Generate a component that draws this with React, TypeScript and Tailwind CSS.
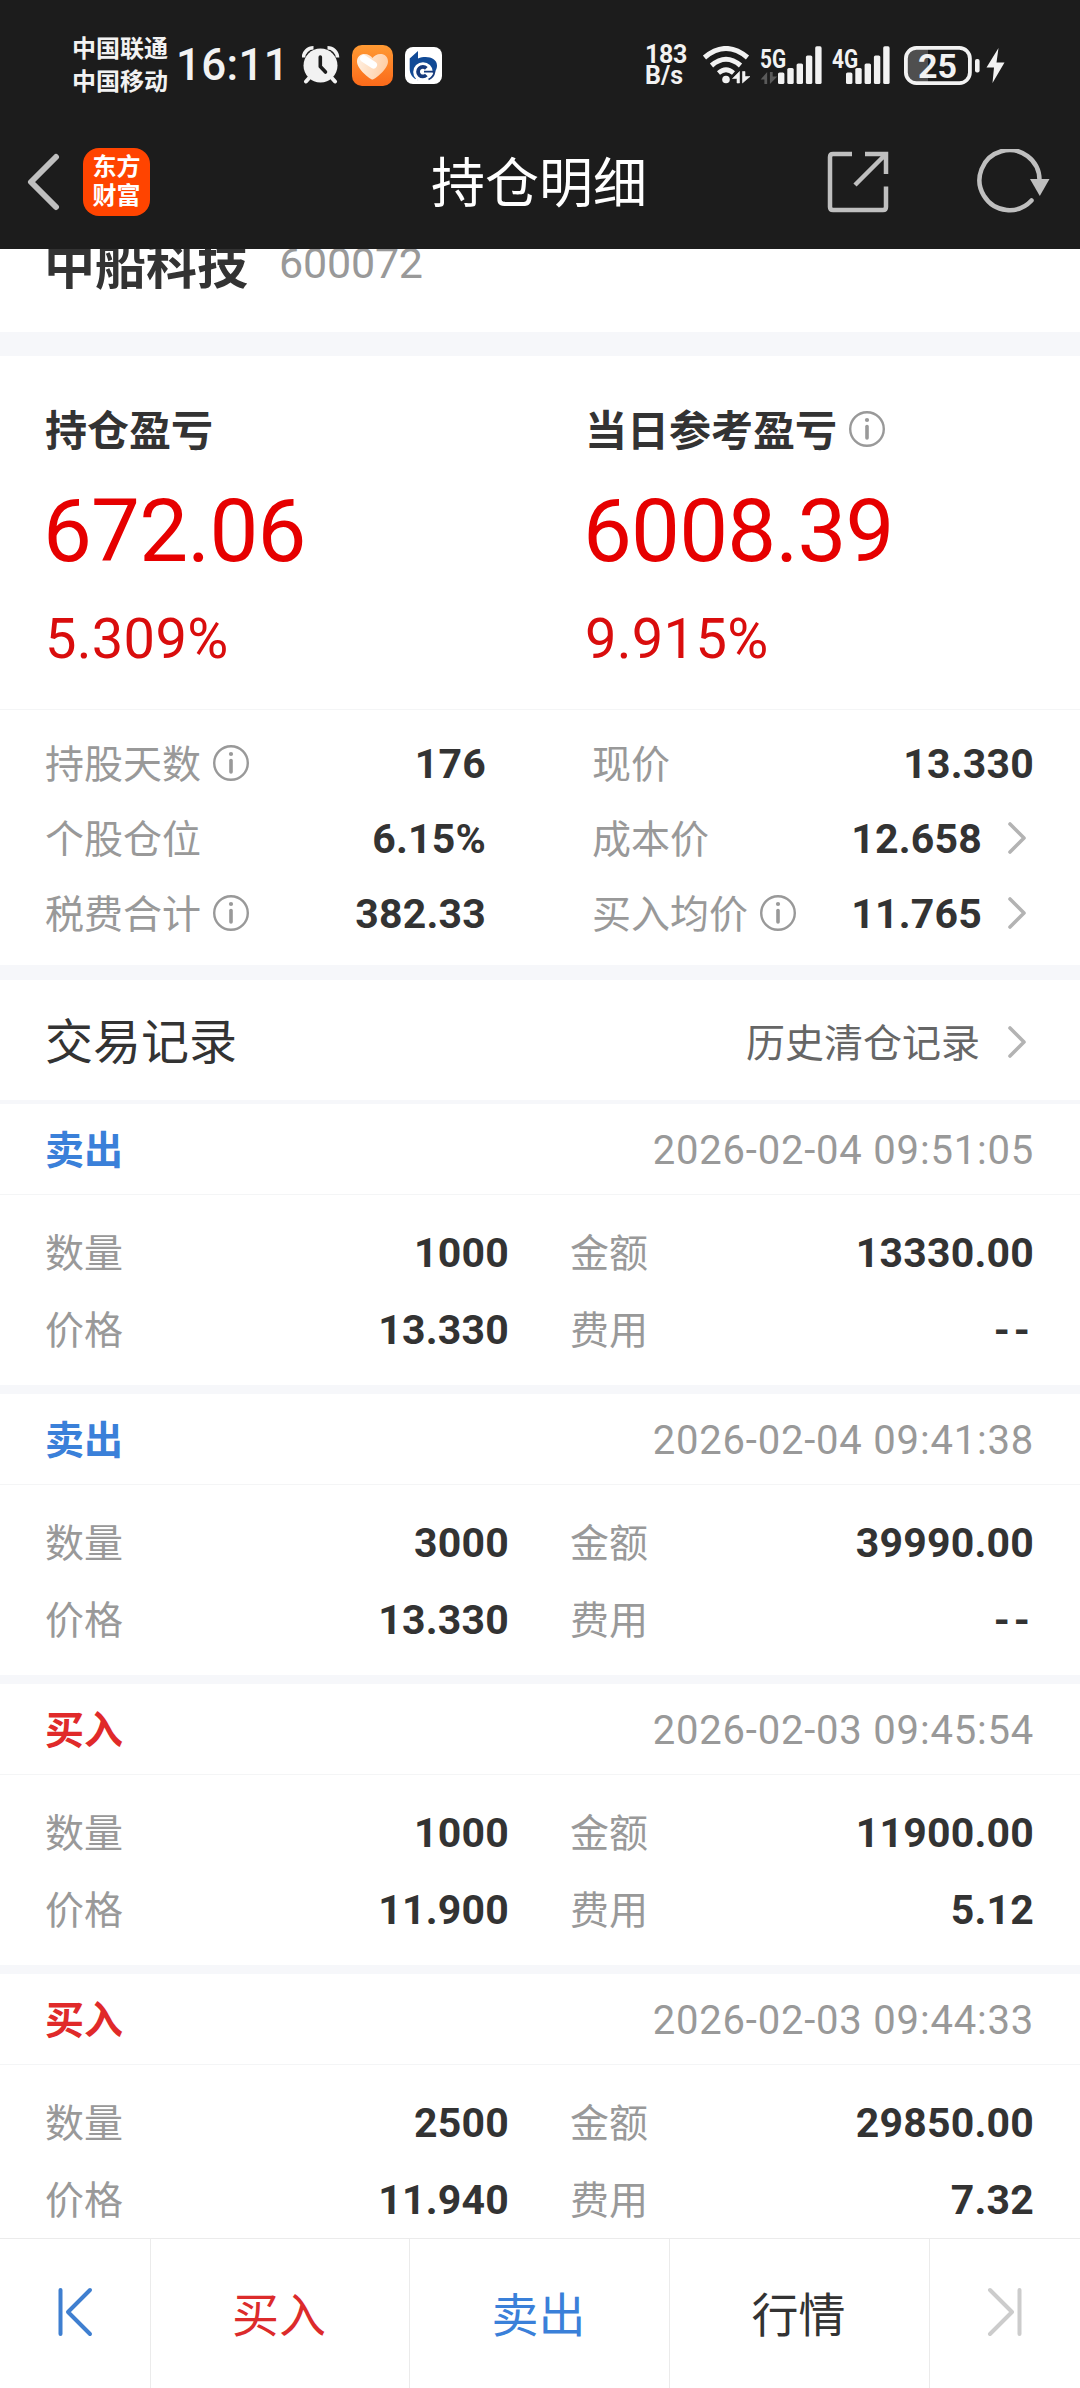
import clsx from 'clsx'
import type { ReactNode } from 'react'

type Side = 'buy' | 'sell'

type TradeRecord = {
  side: Side
  time: string
  quantity: string
  amount: string
  price: string
  fee: string
}

const records: TradeRecord[] = [
  { side: 'sell', time: '2026-02-04 09:51:05', quantity: '1000', amount: '13330.00', price: '13.330', fee: '--' },
  { side: 'sell', time: '2026-02-04 09:41:38', quantity: '3000', amount: '39990.00', price: '13.330', fee: '--' },
  { side: 'buy', time: '2026-02-03 09:45:54', quantity: '1000', amount: '11900.00', price: '11.900', fee: '5.12' },
  { side: 'buy', time: '2026-02-03 09:44:33', quantity: '2500', amount: '29850.00', price: '11.940', fee: '7.32' },
]

function Num({ className, children }: { className?: string; children: ReactNode }) {
  return <span className={clsx("font-['Roboto',sans-serif] leading-none whitespace-nowrap", className)}>{children}</span>
}

function InfoIcon() {
  return (
    <svg className="size-[36px] shrink-0" viewBox="0 0 36 36" fill="none" stroke="#999" strokeLinecap="round">
      <circle cx="18" cy="18" r="16.8" strokeWidth="2.4" />
      <path d="M18 15.5V27" strokeWidth="3.6" />
      <circle cx="18" cy="9" r="2.1" fill="#999" stroke="none" />
    </svg>
  )
}

function Chevron() {
  return (
    <svg className="h-[34px] w-[20px] shrink-0" viewBox="0 0 20 34" fill="none" stroke="#b3b3b3" strokeWidth="3.6" strokeLinecap="round" strokeLinejoin="round">
      <path d="M3 3L17 17L3 31" />
    </svg>
  )
}

function SignalBars() {
  return (
    <svg className="h-[38px] w-[44px] shrink-0" viewBox="0 0 44 38" fill="#f2f2f2">
      <rect x="0" y="26.5" width="6.4" height="11.5" rx="1.6" />
      <rect x="9.3" y="22" width="6.4" height="16" rx="1.6" />
      <rect x="18.6" y="17.5" width="6.4" height="20.5" rx="1.6" />
      <rect x="27.9" y="9.5" width="6.4" height="28.5" rx="1.6" />
      <rect x="37.2" y="0.3" width="6.4" height="37.7" rx="1.6" />
    </svg>
  )
}

function StatusBar() {
  return (
    <div className="flex h-[130px] items-center pl-[72px] text-[#f2f2f2]">
      <div className="flex w-[96px] flex-col pb-[4px] text-[24px] leading-[33px] font-bold whitespace-nowrap">
        <span>中国联通</span>
        <span>中国移动</span>
      </div>
      <Num className="ml-[8px] w-[112px] text-[44px] font-medium tracking-[0.3px]">16:11</Num>

      <svg className="ml-[14px] h-[38px] w-[38px]" viewBox="0 0 38 38" fill="none">
        <path d="M1.500 11.500A10 10 0 0 1 11.500 1.800" stroke="#f2f2f2" strokeWidth="3.6" />
        <path d="M35.500 11.500A10 10 0 0 0 25.500 1.800" stroke="#f2f2f2" strokeWidth="3.6" />
        <path d="M8 31L4 35.500M29 31L33 35.500" stroke="#f2f2f2" strokeWidth="4" strokeLinecap="round" />
        <circle cx="18.500" cy="19.500" r="17" fill="#f2f2f2" />
        <path d="M18.300 11V20.500L23.500 26" stroke="#1c1c1c" strokeWidth="3.6" strokeLinecap="round" strokeLinejoin="round" />
      </svg>

      <svg className="ml-[12px] size-[41px]" viewBox="0 0 41 41">
        <defs>
          <linearGradient id="heartBg" x1="0" y1="0" x2="0" y2="1">
            <stop offset="0" stopColor="#ff9a33" />
            <stop offset="1" stopColor="#fb6a1a" />
          </linearGradient>
          <linearGradient id="heartFill" x1="0" y1="0" x2="1" y2="0.2">
            <stop offset="0" stopColor="#fff1e4" />
            <stop offset="1" stopColor="#ffcfa6" />
          </linearGradient>
        </defs>
        <rect width="41" height="41" rx="10" fill="url(#heartBg)" />
        <path d="M20.500 34.500C18 34.500 5 24 5 16.500C5 11.500 8.500 9 12.500 9C16 9 19 11 20.500 13C22 11 25 9 28.500 9C32.500 9 36 11.500 36 16.500C36 24 23 34.500 20.500 34.500Z" fill="url(#heartFill)" />
        <path d="M11.500 13.500L21.500 20" stroke="#fff" strokeWidth="7" strokeLinecap="round" />
      </svg>

      <svg className="ml-[12px] size-[37px]" viewBox="0 0 37 37" fill="none">
        <rect width="37" height="37" rx="8" fill="#fff" />
        <path d="M4.700 11.500L13 4V11.500C22 8 32 11 32 18.500C32 22.500 30 25.500 26.500 26.500H22L13 33.500C8 31.500 4.700 27 4.700 22Z" fill="#114a96" />
        <circle cx="18" cy="25" r="9.800" fill="#fff" />
        <path d="M11.500 31.500L14 34L9 33Z" fill="#fff" />
        <path d="M21.300 21.300A4.800 4.800 0 1 0 21.300 28" stroke="#163a7c" strokeWidth="3.800" />
        <path d="M19 24.700H29.500C29 28 27 31 23.500 32.500" stroke="#163a7c" strokeWidth="1.800" />
      </svg>

      <Num className="ml-[203px] flex w-[46px] flex-col text-[25px] font-bold">
        <span className="h-[20px] leading-[20px] tracking-[-0.300px]">183</span>
        <span className="h-[20px] leading-[21px]">B/s</span>
      </Num>

      <svg className="ml-[12px] h-[38px] w-[48px]" viewBox="0 0 48 38" fill="none">
        <path d="M1.500 11.500Q23 -6.500 44.500 11.500" stroke="#f2f2f2" strokeWidth="5" />
        <path d="M8.500 19.500Q23 7 37.500 19.500" stroke="#f2f2f2" strokeWidth="5" />
        <path d="M15.500 27Q23 20.500 30.500 27" stroke="#f2f2f2" strokeWidth="4.600" />
        <circle cx="23" cy="33.500" r="3.800" fill="#f2f2f2" />
        <path d="M36.500 25.500V37H34V32.500H29.500ZM39.500 37V25.500H42V30.500H47Z" fill="#f2f2f2" stroke="#f2f2f2" strokeWidth="0.600" />
      </svg>

      <div className="ml-[9px] flex h-[38px] w-[63px]">
        <div className="flex w-[18px] shrink-0 flex-col justify-between">
          <Num className="origin-left scale-x-[0.8] text-[26px] leading-[20px] font-bold">5G</Num>
          <svg className="h-[13px] w-[18px]" viewBox="0 0 18 13" fill="#5a5a5a">
            <path d="M7 0V13H4V8H0ZM10 13V0H13V5H18Z" />
          </svg>
        </div>
        <SignalBars />
      </div>
      <div className="ml-[9px] flex h-[38px] w-[58px]">
        <Num className="w-[14px] origin-left text-[26px] leading-[20px] font-bold">
          <span className="inline-block origin-left scale-x-[0.8]">4G</span>
        </Num>
        <SignalBars />
      </div>

      <svg className="ml-[14px] h-[39px] w-[101px]" viewBox="0 0 101 39" fill="none">
        <path d="M13 2H24V37H13A11 11 0 0 1 2 26V13A11 11 0 0 1 13 2Z" fill="#4f4f4f" />
        <rect x="1.900" y="1.900" width="64" height="35.200" rx="10.500" stroke="#f2f2f2" strokeWidth="3.800" />
        <rect x="71" y="13" width="4.600" height="13.500" rx="2" fill="#f2f2f2" />
        <path d="M94.500 2L82.500 21.500H90L88.500 37L100.500 16.500H92.500Z" fill="#f2f2f2" />
        <text x="33.500" y="32" textAnchor="middle" fill="#f2f2f2" fontFamily="Roboto" fontSize="34" fontWeight="700">25</text>
      </svg>
    </div>
  )
}

function TitleBar() {
  return (
    <div className="grid h-[119px] grid-cols-3 items-center pb-[16px]">
      <div className="flex items-center pl-[26px]">
        <svg className="h-[58px] w-[34px]" viewBox="0 0 34 58" fill="none" stroke="#bfbfbf" strokeWidth="6" strokeLinecap="round" strokeLinejoin="round">
          <path d="M30 4L5 29L30 54" />
        </svg>
        <div className="ml-[23px] flex h-[68px] w-[67px] flex-col items-center justify-center rounded-[16px] bg-[#ff4400] pb-[6px] text-[24px] leading-[29px] font-bold text-white">
          <span>东方</span>
          <span>财富</span>
        </div>
      </div>
      <h1 className="pr-[2px] pb-[4px] text-center text-[54px] leading-none text-white">持仓明细</h1>
      <div className="flex items-center justify-end pr-[30px]">
        <svg className="h-[62px] w-[62px]" viewBox="0 0 62 62" fill="none" stroke="#bfbfbf" strokeWidth="4.500">
          <path d="M25 3H6Q3 3 3 6V56Q3 59 6 59H56Q59 59 59 56V35.500" />
          <path d="M38 3H59V23M58 4L28 34" />
        </svg>
        <svg className="ml-[87px] h-[66px] w-[74px]" viewBox="0 0 74 66" fill="none">
          <path d="M55.500 51.500A30 30 0 1 1 63.500 31" stroke="#bfbfbf" strokeWidth="4.500" strokeLinecap="round" />
          <path d="M54 30H73.500L63.800 47Z" fill="#bfbfbf" />
        </svg>
      </div>
    </div>
  )
}

function ProfitCard({ label, value, rate, info }: { label: string; value: string; rate: string; info?: boolean }) {
  return (
    <div className="flex flex-col pt-[48px] pl-[45px]">
      <div className="flex h-[50px] items-center">
        <span className="pb-[3px] text-[42px] leading-none font-bold text-[#333]">{label}</span>
        {info ? <div className="ml-[12px]"><InfoIcon /></div> : null}
      </div>
      <Num className="mt-[34px] -ml-[2px] text-[87px] tracking-[-0.8px] text-[#e60000]">{value}</Num>
      <Num className="mt-[36px] text-[56px] tracking-[0.3px] text-[#d90d0d]">{rate}</Num>
    </div>
  )
}

function DetailItem({ label, value, info, arrow }: { label: string; value: string; info?: boolean; arrow?: boolean }) {
  return (
    <div className="flex h-[75px] items-center">
      <span className="pb-[3px] text-[39px] leading-none text-[#999]">{label}</span>
      {info ? <div className="ml-[12px]"><InfoIcon /></div> : null}
      <Num className="ml-auto pt-[3px] text-[41px] font-bold tracking-[0.2px] text-[#333]">{value}</Num>
      {arrow ? <div className="mr-[7px] ml-[25px]"><Chevron /></div> : null}
    </div>
  )
}

function Field({ label, value }: { label: string; value: string }) {
  return (
    <div className="flex h-[77px] items-center justify-between">
      <span className="pb-[3px] text-[39px] leading-none text-[#999]">{label}</span>
      <Num className={clsx('pt-[3px] text-[41px] font-bold text-[#333]', value === '--' ? 'tracking-[4px]' : 'tracking-[0.2px]')}>{value}</Num>
    </div>
  )
}

function RecordCard({ record }: { record: TradeRecord }) {
  return (
    <article className="h-[290px] shrink-0 border-b-[9px] border-[#f6f7fa]">
      <div className="flex h-[91px] items-center justify-between border-b border-[#f4f5f6] pr-[46px] pl-[45px]">
        <span className={clsx('pb-[3px] text-[39px] leading-none font-bold', record.side === 'sell' ? 'text-[#3a80d9]' : 'text-[#e02a2a]')}>
          {record.side === 'sell' ? '卖出' : '买入'}
        </span>
        <Num className="pt-[3px] text-[40px] tracking-[0.800px] text-[#999]">{record.time}</Num>
      </div>
      <div className="grid grid-cols-[464px_464px] justify-between pt-[18px] pr-[46px] pl-[45px]">
        <Field label="数量" value={record.quantity} />
        <Field label="金额" value={record.amount} />
        <Field label="价格" value={record.price} />
        <Field label="费用" value={record.fee} />
      </div>
    </article>
  )
}

function BottomBar() {
  return (
    <nav className="grid h-[150px] shrink-0 grid-cols-[151px_259px_260px_260px_150px] divide-x divide-[#ebebeb] border-t border-[#ebebeb] bg-white text-[47px] leading-none">
      <div className="flex items-center justify-center pb-[3px]">
        <svg className="h-[50px] w-[36px]" viewBox="0 0 36 50" fill="none" stroke="#3f7fd0" strokeWidth="4" strokeLinecap="round" strokeLinejoin="round">
          <path d="M3.500 3V47M33 3L11 25L33 47" />
        </svg>
      </div>
      <div className="flex items-center justify-center pr-[2px] pb-[5px] text-[#dc2b2b]">买入</div>
      <div className="flex items-center justify-center pr-[2px] pb-[5px] text-[#3a80d9]">卖出</div>
      <div className="flex items-center justify-center pr-[2px] pb-[5px] text-[#333]">行情</div>
      <div className="flex items-center justify-center pb-[3px]">
        <svg className="h-[50px] w-[36px]" viewBox="0 0 36 50" fill="none" stroke="#ccc" strokeWidth="4" strokeLinecap="round" strokeLinejoin="round">
          <path d="M32.500 3V47M3 3L25 25L3 47" />
        </svg>
      </div>
    </nav>
  )
}

export default function App() {
  return (
    <div className="flex h-[2388px] w-[1080px] flex-col overflow-hidden bg-white font-['Noto_Sans_CJK_SC',sans-serif]">
      <header className="h-[249px] shrink-0 bg-[#1c1c1c]">
        <StatusBar />
        <TitleBar />
      </header>

      <main className="flex min-h-0 flex-1 flex-col overflow-hidden">
        {/* scrolled partly under the header */}
        <section className="-mt-[55px] flex h-[138px] shrink-0 items-center pl-[44px]">
          <span className="pb-[2px] text-[51px] leading-none font-bold text-[#333]">中船科技</span>
          <Num className="ml-[31px] text-[43px] tracking-[-0.2px] text-[#999]">600072</Num>
        </section>

        <section className="grid h-[378px] shrink-0 grid-cols-2 border-t-[24px] border-b border-t-[#f6f7fa] border-b-[#f4f5f6]">
          <ProfitCard label="持仓盈亏" value="672.06" rate="5.309%" />
          <ProfitCard label="当日参考盈亏" value="6008.39" rate="9.915%" info />
        </section>

        <section className="grid h-[270px] shrink-0 grid-cols-[441px_442px] content-start justify-between border-b-[15px] border-[#f6f7fa] pt-[15px] pr-[46px] pl-[45px]">
          <DetailItem label="持股天数" value="176" info />
          <DetailItem label="现价" value="13.330" />
          <DetailItem label="个股仓位" value="6.15%" />
          <DetailItem label="成本价" value="12.658" arrow />
          <DetailItem label="税费合计" value="382.33" info />
          <DetailItem label="买入均价" value="11.765" info arrow />
        </section>

        <section className="flex h-[124px] shrink-0 items-center border-b-[4px] border-[#f6f7fa] pr-[53px] pl-[45px]">
          <h2 className="pb-[5px] text-[48px] leading-none text-[#333]">交易记录</h2>
          <span className="ml-auto text-[39px] leading-none text-[#666]">历史清仓记录</span>
          <div className="ml-[27px] pt-[3px]"><Chevron /></div>
        </section>

        {records.map((record) => (
          <RecordCard key={record.time} record={record} />
        ))}
      </main>

      <BottomBar />
    </div>
  )
}
